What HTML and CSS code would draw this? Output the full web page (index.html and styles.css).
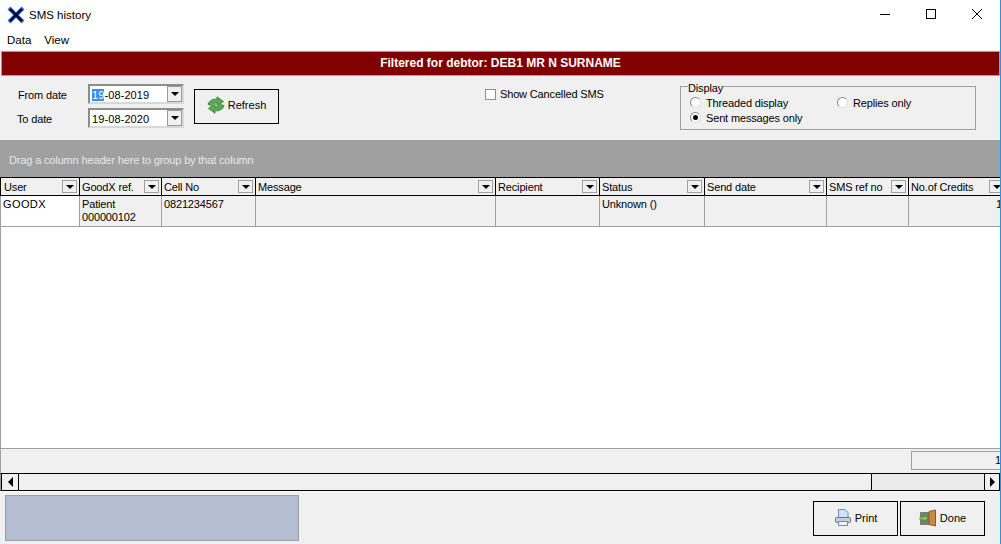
FILE: index.html
```html
<!DOCTYPE html>
<html lang="en">
<head>
<meta charset="utf-8">
<title>SMS history</title>
<link rel="stylesheet" href="styles.css">
</head>
<body>
<div class="window">
  <header class="titlebar">
    <svg class="app-icon" width="18" height="18" viewBox="0 0 18 18">
      <path d="M2 2L16 16M16 2L2 16" stroke="#2a62d8" stroke-width="4" fill="none"/>
      <path d="M3 3L15 15M15 3L3 15" stroke="#00002a" stroke-width="2.400" fill="none"/>
    </svg>
    <span class="title">SMS history</span>
    <div class="win-controls">
      <svg class="win-btn" width="46" height="30" viewBox="0 0 46 30"><path d="M18 14.500H28" stroke="#000" fill="none"/></svg>
      <svg class="win-btn" width="46" height="30" viewBox="0 0 46 30"><rect x="18.500" y="9.500" width="9" height="9" stroke="#000" fill="none"/></svg>
      <svg class="win-btn" width="46" height="30" viewBox="0 0 46 30"><path d="M18 9L28 19M28 9L18 19" stroke="#000" fill="none"/></svg>
    </div>
  </header>
  <nav class="menubar"><span>Data</span><span>View</span></nav>
  <div class="banner">Filtered for debtor: DEB1 MR N SURNAME</div>
  <section class="filters">
    <div class="dates">
      <label class="from-label">From date</label>
      <div class="date-input"><span class="date-text"><span class="sel">19</span>-08-2019</span><span class="drop"><i></i></span></div>
      <label class="to-label">To date</label>
      <div class="date-input"><span class="date-text">19-08-2020</span><span class="drop"><i></i></span></div>
    </div>
    <button class="btn refresh">
      <svg width="18" height="18" viewBox="0 0 18 18">
        <g fill="#58ab4c" stroke="#2f7a35" stroke-width=".8">
          <path d="M1 8.500C2 4.500 6 2.800 10 3.200V.8L16.500 5.500L10 10V7.200C7.500 6.800 5.500 7.500 4.500 9.500Z"/>
          <path d="M17 9.500C16 13.500 12 15.200 8 14.800V17.200L1.500 12.500L8 8V10.800C10.500 11.200 12.500 10.500 13.500 8.500Z"/>
        </g>
      </svg>
      Refresh
    </button>
    <label class="check"><span class="box"></span>Show Cancelled SMS</label>
    <fieldset class="display">
      <legend>Display</legend>
      <div class="radio-grid">
        <label class="radio"><span class="dot"></span>Threaded display</label>
        <label class="radio"><span class="dot"></span>Replies only</label>
        <label class="radio"><span class="dot on"></span>Sent messages only</label>
      </div>
    </fieldset>
  </section>
  <div class="group-band">Drag a column header here to group by that column</div>
  <div class="grid-head">
    <div class="hcell first"><span>User</span><span class="hbtn"><i></i></span></div>
    <div class="hcell"><span>GoodX ref.</span><span class="hbtn"><i></i></span></div>
    <div class="hcell"><span>Cell No</span><span class="hbtn"><i></i></span></div>
    <div class="hcell"><span>Message</span><span class="hbtn"><i></i></span></div>
    <div class="hcell"><span>Recipient</span><span class="hbtn"><i></i></span></div>
    <div class="hcell"><span>Status</span><span class="hbtn"><i></i></span></div>
    <div class="hcell"><span>Send date</span><span class="hbtn"><i></i></span></div>
    <div class="hcell"><span>SMS ref no</span><span class="hbtn"><i></i></span></div>
    <div class="hcell last"><span>No.of Credits</span><span class="hbtn"><i></i></span></div>
  </div>
  <div class="grid-row">
    <div class="cell first">GOODX</div>
    <div class="cell">Patient<br>000000102</div>
    <div class="cell">0821234567</div>
    <div class="cell"></div>
    <div class="cell"></div>
    <div class="cell">Unknown ()</div>
    <div class="cell"></div>
    <div class="cell"></div>
    <div class="cell last num">1</div>
  </div>
  <div class="grid-empty"></div>
  <div class="summary"><div class="sum-box">1</div></div>
  <div class="hscroll">
    <span class="sb-btn"><i class="left"></i></span>
    <span class="sb-thumb"></span>
    <span class="sb-track"></span>
    <span class="sb-btn end"><i class="right"></i></span>
  </div>
  <footer class="bottom">
    <div class="status-box"></div>
    <div class="actions">
      <button class="btn">
        <svg width="18" height="18" viewBox="0 0 18 18">
          <path d="M4.500 .5H11L14 3.500V9H4.500Z" fill="#cfe2f7" stroke="#5b93d0"/>
          <rect x="1.500" y="8.500" width="15" height="5" rx="1" fill="#c9cdd2" stroke="#6f7680"/>
          <rect x="4.500" y="12.500" width="9" height="4" fill="#eef4fb" stroke="#5b93d0"/>
        </svg>
        Print
      </button>
      <button class="btn">
        <svg width="18" height="18" viewBox="0 0 18 18">
          <rect x="1" y="3" width="9" height="13" fill="#7b7b78"/>
          <path d="M10 2.500L16.500 1V17L10 15.500Z" fill="#c98a45" stroke="#8a5a25"/>
          <path d="M1 7.500H5V5.500L9 9.500L5 13V11H1Z" fill="#7fc24e" stroke="#3f8a2a" stroke-width=".7"/>
        </svg>
        Done
      </button>
    </div>
  </footer>
</div>
</body>
</html>
```
FILE: styles.css
```css
* { box-sizing: border-box; }
html, body { margin: 0; padding: 0; }
body {
  width: 1001px; height: 544px; overflow: hidden;
  font-family: "Liberation Sans", Arial, sans-serif;
  font-size: 11px; letter-spacing: -.15px; color: #000; background: #f0f0f0;
}
.window { width: 1001px; height: 544px; border-right: 1px solid #2a8fe6; overflow: hidden; display: flex; flex-direction: column; }
.titlebar { height: 30px; background: #fff; display: flex; align-items: center; padding-left: 7px; flex: none; }
.app-icon { flex: none; margin-top: -1px; }
.title { margin-left: 4px; margin-top: -1px; font-size: 11.500px; letter-spacing: 0; }
.win-controls { margin-left: auto; display: flex; }
.win-btn { display: block; }
.menubar { height: 20px; background: #fff; display: flex; gap: 13px; padding: 4px 0 0 7px; flex: none; font-size: 11.500px; letter-spacing: 0; }
.banner {
  height: 25px; margin: 1px 0 0 1px; flex: none; width: 999px;
  background: #800000; border: 1px solid #a0a0a0; color: #fff;
  font-size: 12px; font-weight: 700; letter-spacing: 0; text-align: center; line-height: 23px;
}
.filters { height: 64px; flex: none; display: flex; align-items: flex-start; background: #f0f0f0; }
.dates { display: grid; grid-template-columns: 70px 96px; grid-auto-rows: 20px; row-gap: 4px; margin: 8px 0 0 18px; align-items: center; }
.from-label, .to-label { padding-top: 1px; }
.to-label { margin-left: -1px; }
.date-input { display: flex; height: 20px; background: #fff; border: 2px solid #8c8c8c; border-right-color: #d8d8d8; border-bottom-color: #d8d8d8; align-items: center; }
.date-text { flex: 1; padding: 1px 0 0 2px; letter-spacing: .1px; }
.sel { background: #3a8ee6; color: #fff; }
.drop { width: 15px; height: 16px; background: #f0f0f0; border: 1px solid #9a9a9a; display: flex; align-items: center; justify-content: center; }
.drop i, .hbtn i { width: 0; height: 0; border: 4px solid transparent; border-top: 4px solid #000; border-bottom: 0; display: block; }
.btn {
  width: 85px; height: 35px; border: 1px solid #000; background: #f0f0f0; padding: 0 0 1px;
  font: inherit; letter-spacing: 0; color: #000; display: flex; align-items: center; justify-content: center; gap: 3px;
}
.refresh { margin: 13px 0 0 10px; padding-bottom: 3px; }
.check { display: flex; align-items: center; margin: 11px 0 0 206px; width: 120px; height: 14px; white-space: nowrap; flex: none; }
.box { width: 11px; height: 11px; border: 1px solid #8e8e8e; background: #fff; margin-right: 4px; flex: none; }
.display { width: 296px; height: 52px; margin: 2px 0 0 75px; padding: 0 0 0 9px; border: 1px solid #a0a0a0; min-width: 0; flex: none; }
.display legend { padding: 4px 0 0; margin-left: -2px; line-height: 12px; height: 16px; }
.radio-grid { display: grid; grid-template-columns: 147px 1fr; grid-auto-rows: 15px; margin-top: 1px; }
.radio { display: flex; align-items: center; white-space: nowrap; }
.dot { width: 11px; height: 11px; border-radius: 50%; background: #fff; border: 1px solid #8a8a8a; border-right-color: #ddd; border-bottom-color: #ddd; margin-right: 5px; flex: none; display: flex; align-items: center; justify-content: center; }
.dot.on::after { content: ""; width: 5px; height: 5px; border-radius: 50%; background: #000; }
.group-band { height: 37px; background: #a0a0a0; color: #e8e8e8; flex: none; padding: 13px 0 0 9px; line-height: 14px; }
.grid-head, .grid-row {
  display: grid; flex: none; width: 1012px; margin-right: -12px;
  grid-template-columns: 79px 82px 94px 240px 104px 105px 122px 82px 104px;
}
.grid-head { height: 19px; border-top: 1px solid #000; border-bottom: 1px solid #000; border-left: 1px solid #000; }
.hcell { border-right: 1px solid #000; display: flex; align-items: center; justify-content: space-between; padding: 0 2px; background: #f0f0f0; white-space: nowrap; }
.hcell.first { padding-left: 3px; }
.hcell.last { border-right: 0; justify-content: flex-start; gap: 16px; }
.hbtn { width: 15px; height: 13px; background: #f0f0f0; border: 1px solid #a0a0a0; display: flex; align-items: center; justify-content: center; flex: none; }
.grid-row { height: 31px; border-left: 1px solid #a0a0a0; border-bottom: 1px solid #a0a0a0; }
.cell { background: #f0f0f0; border-right: 1px solid #a0a0a0; padding: 2px 0 0 2px; line-height: 13px; }
.cell.first { background: #fff; letter-spacing: .4px; }
.cell.last { border-right: 0; }
.cell.num { padding-left: 87px; }
.grid-empty { flex: 1; background: #fff; border-left: 1px solid #a0a0a0; }
.summary { height: 25px; flex: none; background: #f0f0f0; border-left: 1px solid #a0a0a0; border-top: 1px solid #a0a0a0; padding: 2px 0 0 910px; }
.sum-box { height: 19px; width: 90px; border: 1px solid #a0a0a0; border-right: 0; text-align: right; line-height: 17px; overflow: hidden; }
.hscroll { height: 18px; flex: none; display: flex; border-top: 1px solid #000; border-bottom: 1px solid #000; border-left: 1px solid #a0a0a0; }
.sb-btn { width: 18px; border-left: 1px solid #000; border-right: 1px solid #000; display: flex; align-items: center; justify-content: center; background: #f0f0f0; flex: none; }
.sb-btn.end { width: 16px; }
.sb-btn .left { border: 5px solid transparent; border-right: 5px solid #000; border-left: 0; }
.sb-btn .right { border: 5px solid transparent; border-left: 5px solid #000; border-right: 0; }
.sb-thumb { width: 853px; background: #f0f0f0; border-right: 1px solid #000; flex: none; }
.sb-track { flex: 1; background: repeating-conic-gradient(#f4f4f4 0 25%, #e2e2e2 0 50%) 0 0 / 2px 2px; }
.bottom { flex: none; height: 53px; display: flex; justify-content: space-between; align-items: flex-start; padding: 3px 15px 0 5px; background: #f0f0f0; border-top: 1px solid #fafafa; }
.status-box { width: 294px; height: 46px; background: #b5bdd3; border: 1px solid #a0a0a0; }
.actions { display: flex; gap: 2px; margin-top: 6px; }
```
